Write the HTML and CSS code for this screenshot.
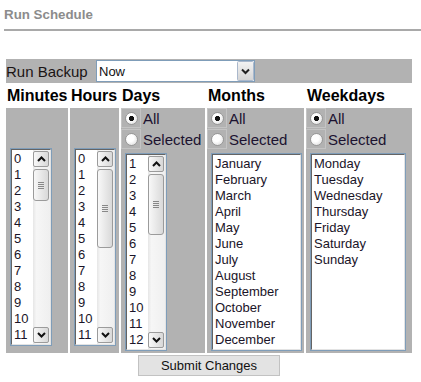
FILE: index.html
```html
<!DOCTYPE html>
<html lang="en">
<head>
  <meta charset="UTF-8" />
  <meta name="viewport" content="width=device-width, initial-scale=1.0"/>
  <title>Run Schedule</title>
  <link rel="stylesheet" href="styles.css">
</head>
<body>
  <div class="page-title">Run Schedule</div>

  <form class="schedule-form" onsubmit="return false;">
    <table class="schedule">
      <colgroup>
        <col class="col-min"><col class="col-hour"><col class="col-day"><col class="col-month"><col class="col-week">
      </colgroup>
      <tr>
        <td colspan="5" class="run-cell">
          <label class="run-label" for="runBackup">Run Backup</label><select id="runBackup" class="run-select">
            <option>Now</option>
            <option>On Schedule</option>
            <option>Never</option>
          </select>
        </td>
      </tr>
      <tr class="heads">
        <th>Minutes</th>
        <th>Hours</th>
        <th>Days</th>
        <th>Months</th>
        <th>Weekdays</th>
      </tr>
      <tr class="pickers">
        <td class="plain">
          <div class="listbox" role="listbox" aria-multiselectable="true" id="minutes" data-from="0" data-to="59"></div>
        </td>
        <td class="plain">
          <div class="listbox" role="listbox" aria-multiselectable="true" id="hours" data-from="0" data-to="23"></div>
        </td>
        <td>
          <label class="choice"><span class="radio-box"><input type="radio" name="dayMode" checked></span>All</label>
          <label class="choice"><span class="radio-box"><input type="radio" name="dayMode"></span>Selected</label>
          <div class="listbox" role="listbox" aria-multiselectable="true" id="days" data-from="1" data-to="31"></div>
        </td>
        <td>
          <label class="choice"><span class="radio-box"><input type="radio" name="monthMode" checked></span>All</label>
          <label class="choice"><span class="radio-box"><input type="radio" name="monthMode"></span>Selected</label>
          <div class="listbox listbox-months" role="listbox" aria-multiselectable="true" id="months">
            <div class="list-items">
              <div class="list-item" role="option">January</div>
              <div class="list-item" role="option">February</div>
              <div class="list-item" role="option">March</div>
              <div class="list-item" role="option">April</div>
              <div class="list-item" role="option">May</div>
              <div class="list-item" role="option">June</div>
              <div class="list-item" role="option">July</div>
              <div class="list-item" role="option">August</div>
              <div class="list-item" role="option">September</div>
              <div class="list-item" role="option">October</div>
              <div class="list-item" role="option">November</div>
              <div class="list-item" role="option">December</div>
            </div>
          </div>
        </td>
        <td>
          <label class="choice"><span class="radio-box"><input type="radio" name="weekMode" checked></span>All</label>
          <label class="choice"><span class="radio-box"><input type="radio" name="weekMode"></span>Selected</label>
          <div class="listbox listbox-week" role="listbox" aria-multiselectable="true" id="weekdays">
            <div class="list-items">
              <div class="list-item" role="option">Monday</div>
              <div class="list-item" role="option">Tuesday</div>
              <div class="list-item" role="option">Wednesday</div>
              <div class="list-item" role="option">Thursday</div>
              <div class="list-item" role="option">Friday</div>
              <div class="list-item" role="option">Saturday</div>
              <div class="list-item" role="option">Sunday</div>
            </div>
          </div>
        </td>
      </tr>
    </table>

    <div class="actions">
      <button type="submit" class="submit-btn">Submit Changes</button>
    </div>
  </form>

  <script>
    const VISIBLE = 12;
    const TRACK = 158;

    // number lists with their scroll bar
    function fillList(box) {
      const from = parseInt(box.dataset.from, 10);
      const to = parseInt(box.dataset.to, 10);
      const total = to - from + 1;

      const items = document.createElement("div");
      items.className = "list-items";
      for (let i = from; i <= to; i++) {
        const item = document.createElement("div");
        item.className = "list-item";
        item.setAttribute("role", "option");
        item.textContent = i;
        items.appendChild(item);
      }

      const bar = document.createElement("div");
      bar.className = "scrollbar";
      bar.innerHTML =
        '<span class="sb-btn sb-up"></span>' +
        '<span class="sb-track"><span class="sb-thumb"></span></span>' +
        '<span class="sb-btn sb-down"></span>';
      bar.querySelector(".sb-thumb").style.height = Math.round(TRACK * VISIBLE / total) + "px";

      box.appendChild(items);
      box.appendChild(bar);
    }

    document.querySelectorAll(".listbox[data-from]").forEach(fillList);
  </script>
</body>
</html>
```

FILE: styles.css
```css
body {
  margin: 0;
  font-family: "Liberation Sans", Arial, sans-serif;
  color: #111;
  background: #fff;
}

.page-title {
  margin-left: 4px;
  padding: 7px 0 6px 0;
  font-size: 13.33px;
  line-height: 16px;
  font-weight: bold;
  color: #8c8c8c;
  border-bottom: 2px solid #a9a9a9;
}

.schedule-form {
  margin: 26px 0 0 4px;
  width: 410px;
}

.schedule {
  border-spacing: 2px;
  table-layout: fixed;
  width: 410px;
}

.col-min { width: 62px; }
.col-hour { width: 49px; }
.col-day { width: 84px; }
.col-month { width: 97px; }
.col-week { width: 106px; }

.schedule td,
.schedule th {
  padding: 0;
}

/* top row */
.run-cell {
  background: #b2b2b2;
  height: 24px;
  vertical-align: middle;
}

.run-label {
  display: inline-block;
  width: 90px;
  font-size: 15px;
  color: #1a1414;
  vertical-align: middle;
}

.run-select {
  -webkit-appearance: none;
  appearance: none;
  vertical-align: middle;
  width: 159px;
  height: 22px;
  margin: 0;
  padding: 0 0 0 2px;
  border: 1px solid #7f9db9;
  border-radius: 0;
  font: 13px "Liberation Sans", Arial, sans-serif;
  color: #111;
  background: #fff url("data:image/svg+xml,<svg xmlns='http://www.w3.org/2000/svg' width='17' height='20'><defs><linearGradient id='b' x1='0' y1='0' x2='0' y2='1'><stop offset='0' stop-color='%23f3f3f3'/><stop offset='1' stop-color='%23d4d4d4'/></linearGradient></defs><rect x='.5' y='.5' width='16' height='19' rx='1' fill='url(%23b)' stroke='%23aab8cc'/><path d='M5 8.5l3.5 3.5L12 8.5' fill='none' stroke='%23222' stroke-width='2'/></svg>") no-repeat right 0 center;
  outline: none;
}

/* column titles */
.heads th {
  height: 21px;
  padding: 0 1px;
  text-align: left;
  font-size: 16px;
  font-weight: bold;
  color: #000;
  white-space: nowrap;
  vertical-align: middle;
}

/* gray picker cells */
.pickers td {
  background: #b2b2b2;
  height: 245px;
  vertical-align: top;
}

.plain .listbox {
  margin-top: 41px;
}

.choice {
  display: flex;
  align-items: center;
  height: 21px;
  font-size: 15px;
  color: #1c1230;
  white-space: nowrap;
}

.radio-box {
  width: 20px;
  height: 20px;
  box-sizing: border-box;
  border: 1px solid #c4c4c4;
  display: flex;
  align-items: center;
  justify-content: center;
  margin-right: 2px;
  margin-bottom: 1px;
}

.radio-box input {
  -webkit-appearance: none;
  appearance: none;
  width: 13px;
  height: 13px;
  margin: 0;
  border-radius: 50%;
  border: 1px solid #979797;
  background: radial-gradient(circle at 40% 38%, #fff 35%, #d6d6d6 100%);
}

.radio-box input:checked {
  background:
    radial-gradient(circle at 50% 50%, #111 0 2.3px, transparent 2.9px),
    radial-gradient(circle at 40% 38%, #fff 35%, #d6d6d6 100%);
}

.choice + .listbox {
  margin-top: 4px;
}

/* list boxes */
.listbox {
  display: flex;
  box-sizing: border-box;
  width: 40px;
  height: 196px;
  margin-left: 5px;
  border: 1px solid;
  border-color: #646464 #e3e3e3 #e3e3e3 #646464;
  box-shadow: 0 0 0 1px #7f9db9;
  background: #fff;
  font-size: 13px;
  color: #1a1428;
  overflow: hidden;
}

.list-items {
  flex: 1;
  min-width: 0;
  padding: 1px 0;
  overflow: hidden;
}

.list-item {
  height: 16px;
  line-height: 16px;
  padding: 0 2px;
  white-space: nowrap;
  cursor: default;
}

.list-item:nth-child(n+13) {
  display: none;
}

.listbox-months {
  width: 89px;
}

.listbox-week {
  width: 94px;
}

.scrollbar {
  display: flex;
  flex-direction: column;
  width: 17px;
  flex: none;
  box-sizing: border-box;
  padding: 1px 1px 1px 0;
  background: linear-gradient(to right, #e6e6e6, #f6f6f6 20%, #efefef);
}

.sb-btn {
  display: block;
  height: 16px;
  box-sizing: border-box;
  border: 1px solid #9b9b9b;
  border-radius: 2px;
  background-color: #e8e8e8;
  background-repeat: no-repeat;
  background-position: center;
}

.sb-up {
  background-image:
    url("data:image/svg+xml,<svg xmlns='http://www.w3.org/2000/svg' width='9' height='6'><path d='M1 5l3.5-3.5L8 5' fill='none' stroke='%23111' stroke-width='2'/></svg>"),
    linear-gradient(to right, #f8f8f8, #d8d8d8);
}

.sb-down {
  background-image:
    url("data:image/svg+xml,<svg xmlns='http://www.w3.org/2000/svg' width='9' height='6'><path d='M1 1l3.5 3.5L8 1' fill='none' stroke='%23111' stroke-width='2'/></svg>"),
    linear-gradient(to right, #f8f8f8, #d8d8d8);
}

.sb-track {
  flex: 1;
  display: block;
  padding: 2px 0;
}

.sb-thumb {
  display: block;
  box-sizing: border-box;
  border: 1px solid #9b9b9b;
  border-radius: 3px;
  background:
    url("data:image/svg+xml,<svg xmlns='http://www.w3.org/2000/svg' width='6' height='7'><path d='M0 .5h6M0 2.5h6M0 4.5h6M0 6.5h6' stroke='%23888'/></svg>") center no-repeat,
    linear-gradient(to right, #f8f8f8, #d9d9d9);
}

/* submit */
.actions {
  text-align: center;
}

.submit-btn {
  width: 142px;
  height: 21px;
  margin: 0;
  padding: 0;
  border: 1px solid #c2c2c2;
  border-radius: 0;
  background: #e3e3e3;
  font: 13px "Liberation Sans", Arial, sans-serif;
  color: #111;
  cursor: pointer;
}
```
